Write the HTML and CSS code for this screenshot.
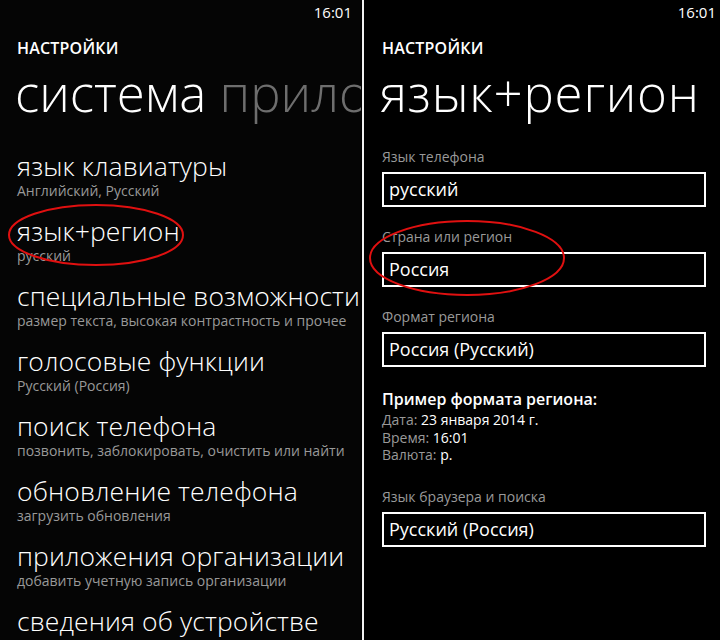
FILE: index.html
```html
<!DOCTYPE html>
<html lang="ru">
<head>
<meta charset="utf-8">
<title>настройки</title>
<link rel="stylesheet" href="styles.css">
</head>
<body>
<div class="screen">
  <section class="panel panel-left">
    <div class="status status-left">16:01</div>
    <div class="app-title">НАСТРОЙКИ</div>
    <div class="pivot pivot-tight"><span class="pivot-active">система</span> <span class="pivot-next">приложения</span></div>
    <ul class="list">
      <li class="item"><div class="item-title">язык клавиатуры</div><div class="item-sub">Английский, Русский</div></li>
      <li class="item"><div class="item-title">язык+регион</div><div class="item-sub">русский</div></li>
      <li class="item"><div class="item-title">специальные возможности</div><div class="item-sub">размер текста, высокая контрастность и прочее</div></li>
      <li class="item"><div class="item-title">голосовые функции</div><div class="item-sub">Русский (Россия)</div></li>
      <li class="item"><div class="item-title">поиск телефона</div><div class="item-sub">позвонить, заблокировать, очистить или найти</div></li>
      <li class="item"><div class="item-title">обновление телефона</div><div class="item-sub">загрузить обновления</div></li>
      <li class="item"><div class="item-title">приложения организации</div><div class="item-sub">добавить учетную запись организации</div></li>
      <li class="item"><div class="item-title">сведения об устройстве</div><div class="item-sub">сведения о телефоне</div></li>
    </ul>
    <svg class="mark mark-left" width="180" height="66" viewBox="0 0 180 66"><ellipse cx="90" cy="33" rx="87" ry="30" fill="none" stroke="#e01010" stroke-width="2"/></svg>
  </section>
  <div class="divider"></div>
  <section class="panel panel-right">
    <div class="status status-right">16:01</div>
    <div class="app-title">НАСТРОЙКИ</div>
    <div class="pivot"><span class="pivot-active">язык+регион</span></div>
    <div class="form">
      <div class="field">
        <div class="label">Язык телефона</div>
        <div class="box">русский</div>
      </div>
      <div class="field">
        <div class="label">Страна или регион</div>
        <div class="box">Россия</div>
      </div>
      <div class="field">
        <div class="label">Формат региона</div>
        <div class="box">Россия (Русский)</div>
      </div>
      <div class="sample">
        <div class="sample-head">Пример формата региона:</div>
        <div class="sample-line"><span class="dim">Дата:</span> 23 января 2014 г.</div>
        <div class="sample-line"><span class="dim">Время:</span> 16:01</div>
        <div class="sample-line"><span class="dim">Валюта:</span> р.</div>
      </div>
      <div class="field">
        <div class="label">Язык браузера и поиска</div>
        <div class="box">Русский (Россия)</div>
      </div>
    </div>
    <svg class="mark mark-right" width="200" height="80" viewBox="0 0 200 80"><ellipse cx="100" cy="40" rx="97" ry="37" fill="none" stroke="#e01010" stroke-width="2"/></svg>
  </section>
</div>
</body>
</html>
```
FILE: styles.css
```css
* { box-sizing: border-box; }
html, body {
  margin: 0;
  padding: 0;
  background: #000;
}
body {
  font-family: "Open Sans", "Noto Sans", sans-serif;
  color: #fff;
}
.screen {
  display: flex;
  width: 720px;
  height: 640px;
  overflow: hidden;
  background: #000;
}
.panel {
  position: relative;
  height: 640px;
  overflow: hidden;
}
.panel-left {
  width: 361px;
  flex: none;
  padding-left: 17px;
  background: #050505;
}
.panel-right {
  flex: 1;
  padding-left: 18px;
  padding-right: 14px;
}
.divider {
  width: 3px;
  flex: none;
  border-left: 1px solid #000;
  background: #f2f2f2;
}
.status {
  height: 24px;
  font-size: 15px;
  line-height: 24px;
  text-align: right;
  color: #fff;
}
.status-left { padding-right: 9px; }
.status-right { margin-right: -10px; }
.app-title {
  margin-top: 14px;
  font-size: 16px;
  line-height: 20px;
  font-weight: 600;
  letter-spacing: 0.2px;
}
.pivot {
  margin-top: 6px;
  margin-left: -2px;
  font-size: 51px;
  line-height: 56px;
  font-weight: 300;
  letter-spacing: 0.8px;
  white-space: nowrap;
}
.pivot-tight { letter-spacing: 0; }
.pivot-next { color: #6e6e6e; }
.list {
  list-style: none;
  margin: 30px 0 0;
  padding: 0;
}
.item {
  height: 65px;
  white-space: nowrap;
}
.item-title {
  font-size: 26.5px;
  line-height: 32px;
  font-weight: 300;
  letter-spacing: 0.1px;
}
.item-sub {
  font-size: 14px;
  line-height: 18px;
  color: #999;
}
.mark {
  position: absolute;
  pointer-events: none;
}
.mark-left { left: 6px; top: 202px; }
.mark-right { left: 3px; top: 218px; }
.form { margin-top: 27px; }
.field { margin-bottom: 20px; }
.label {
  font-size: 14px;
  line-height: 20px;
  color: #999;
  margin-bottom: 5px;
}
.box {
  height: 35px;
  border: 2px solid #fff;
  padding-left: 5px;
  font-size: 18px;
  line-height: 31px;
  white-space: nowrap;
}
.sample {
  margin-top: 2px;
  margin-bottom: 23px;
}
.sample-head {
  font-size: 16px;
  line-height: 24px;
  font-weight: 600;
}
.sample-line {
  font-size: 14px;
  line-height: 17.5px;
}
.dim { color: #999; }
```
